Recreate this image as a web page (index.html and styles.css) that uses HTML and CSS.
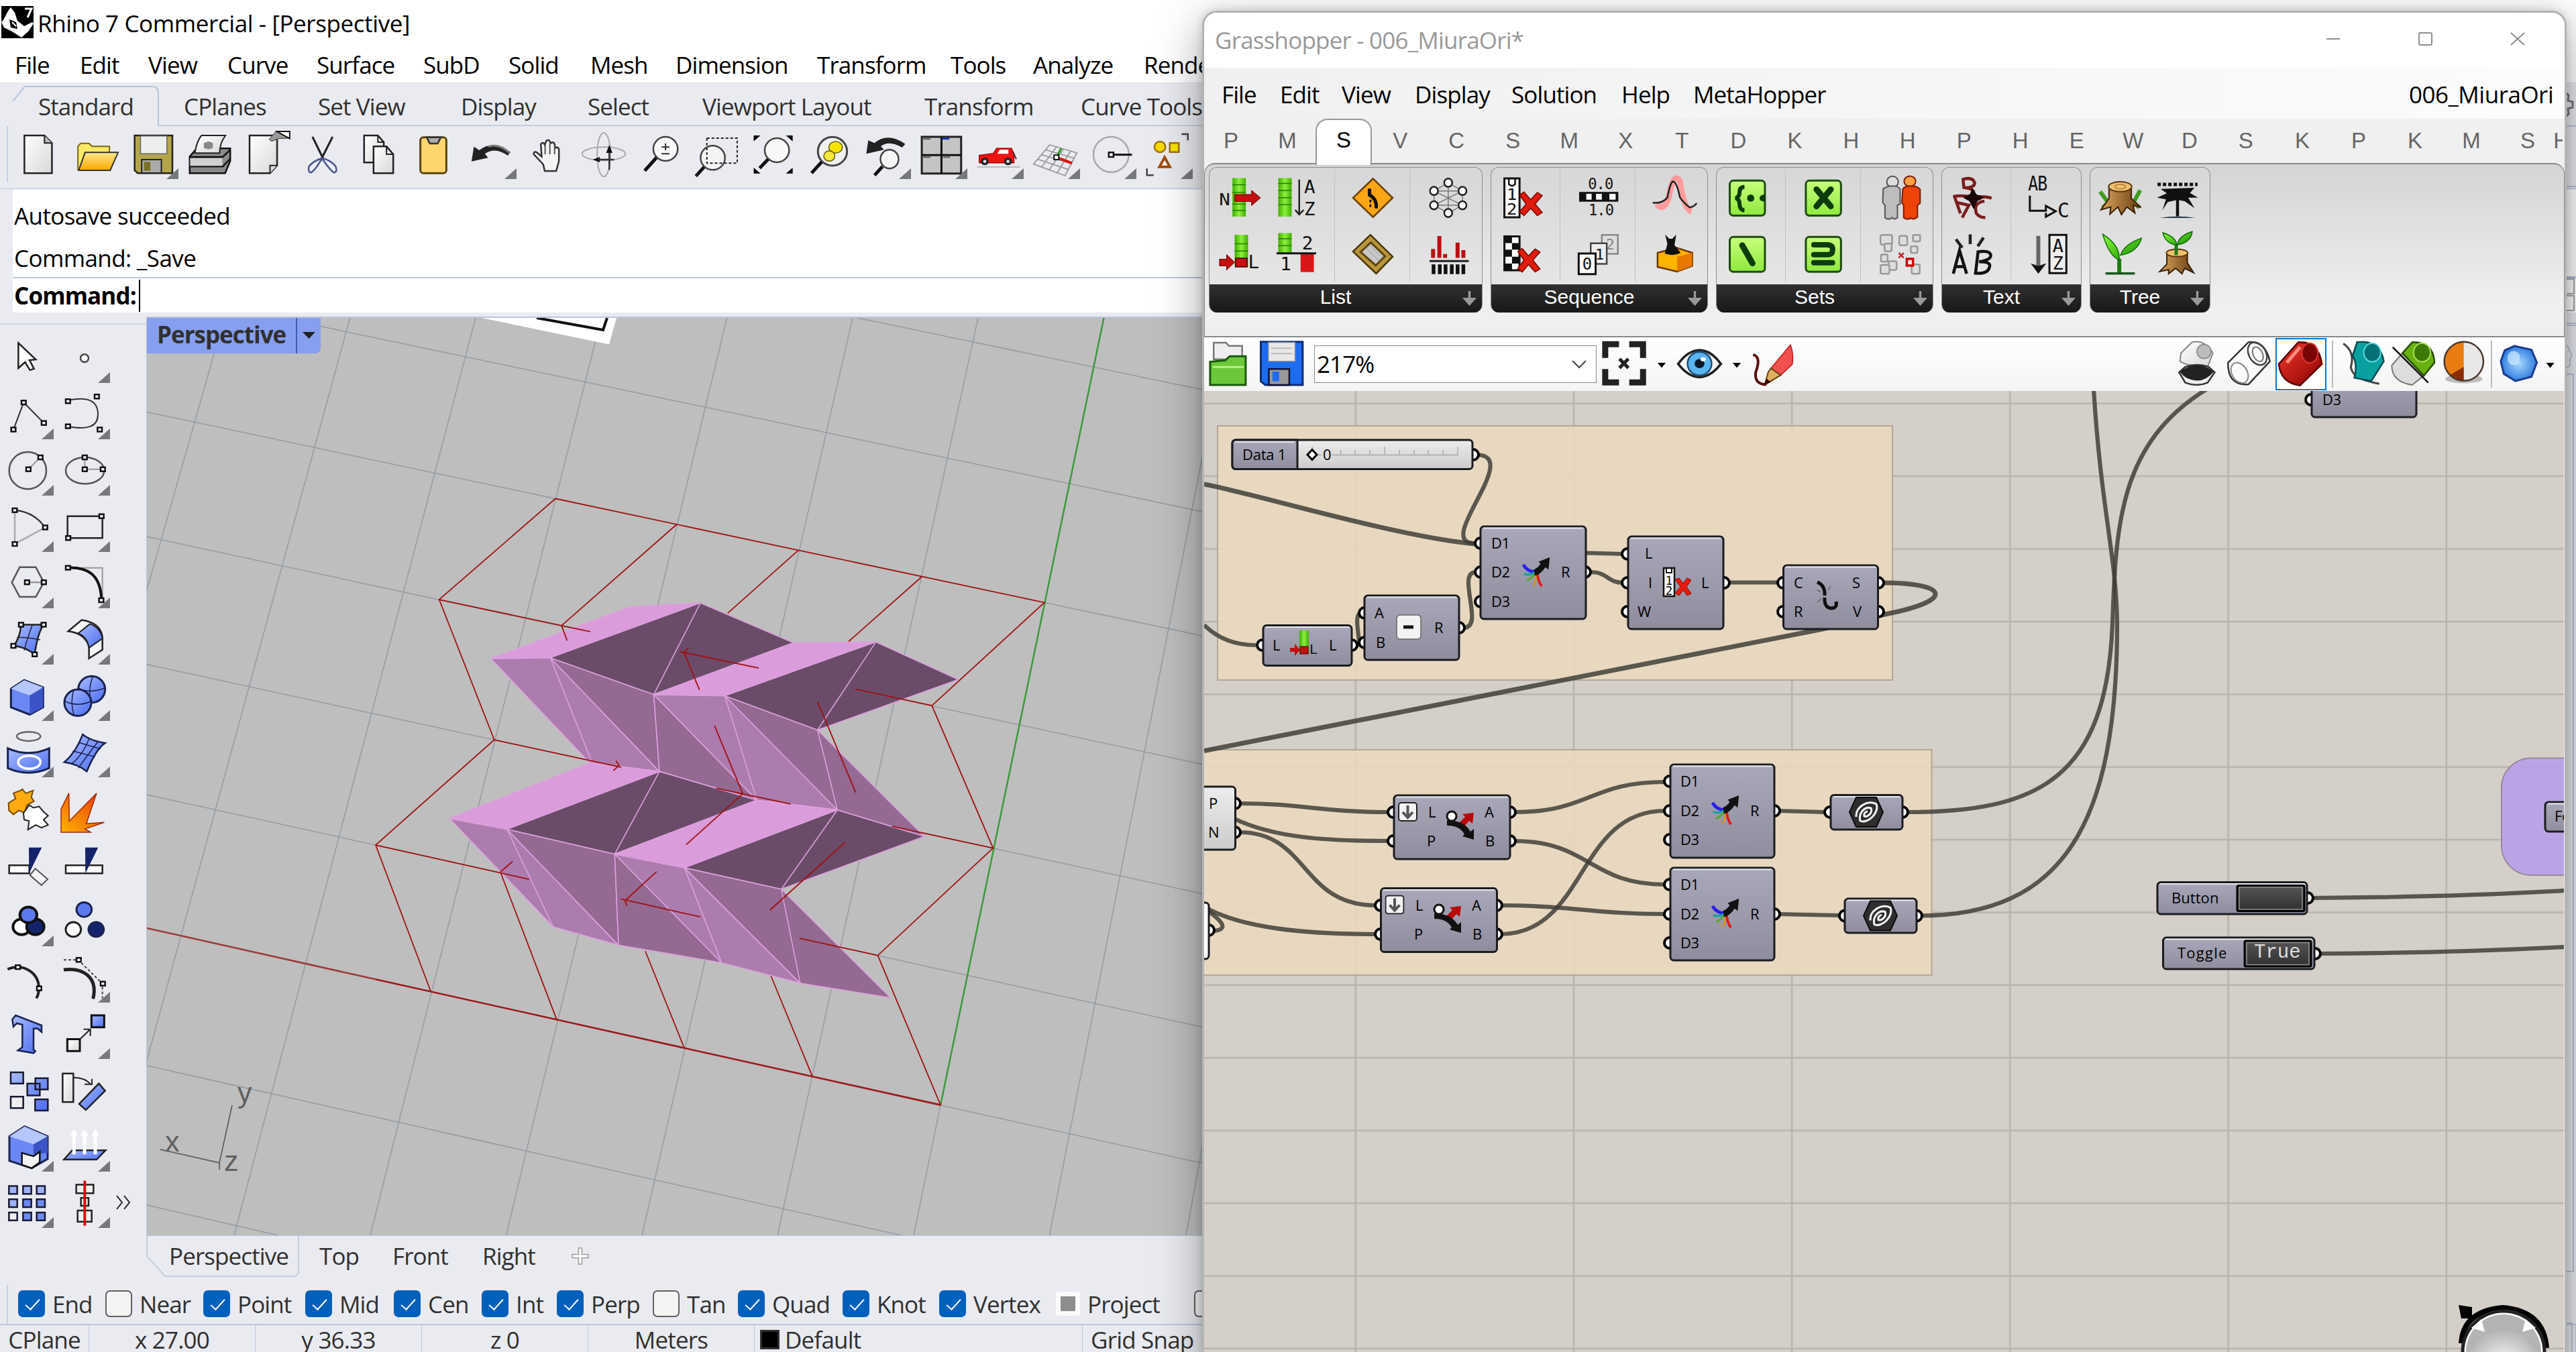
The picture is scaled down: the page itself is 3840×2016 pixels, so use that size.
FILE: index.html
```html
<!DOCTYPE html>
<html lang="en">
<head>
<meta charset="utf-8">
<title>Rhino 7 Commercial - [Perspective]</title>
<link rel="stylesheet" href="styles.css">
</head>
<body>
<svg class="defs" width="0" height="0" aria-hidden="true">
  <defs>
    <linearGradient id="paper" x1="0" y1="0" x2="1" y2="1"><stop offset="0" stop-color="#fff"/><stop offset="1" stop-color="#d8d8d8"/></linearGradient>
    <linearGradient id="gold" x1="0" y1="0" x2="0" y2="1"><stop offset="0" stop-color="#ffe98a"/><stop offset="1" stop-color="#f9a800"/></linearGradient>
    <linearGradient id="blue" x1="0" y1="0" x2="1" y2="1"><stop offset="0" stop-color="#a9bcff"/><stop offset="1" stop-color="#4a6cf0"/></linearGradient>
    <linearGradient id="fire" x1="0" y1="1" x2="1" y2="0"><stop offset="0" stop-color="#ffb400"/><stop offset="1" stop-color="#e83400"/></linearGradient>
    <linearGradient id="green" x1="0" y1="0" x2="0" y2="1"><stop offset="0" stop-color="#c8ff7c"/><stop offset="1" stop-color="#8fe83e"/></linearGradient>
    <linearGradient id="bar" x1="0" y1="0" x2="1" y2="0"><stop offset="0" stop-color="#3fae00"/><stop offset=".5" stop-color="#8cf03c"/><stop offset="1" stop-color="#3fae00"/></linearGradient>
    <linearGradient id="node" x1="0" y1="0" x2="0" y2="1"><stop offset="0" stop-color="#a9a8ba"/><stop offset="1" stop-color="#8f8d9d"/></linearGradient>
    <linearGradient id="lite" x1="0" y1="0" x2="0" y2="1"><stop offset="0" stop-color="#ededed"/><stop offset="1" stop-color="#cbcbcb"/></linearGradient>
    <linearGradient id="dark" x1="0" y1="0" x2="0" y2="1"><stop offset="0" stop-color="#555"/><stop offset="1" stop-color="#303030"/></linearGradient>
    <linearGradient id="red" x1="0" y1="0" x2="1" y2="1"><stop offset="0" stop-color="#f03a2c"/><stop offset="1" stop-color="#8a0000"/></linearGradient>
    <linearGradient id="wood" x1="0" y1="0" x2="1" y2="0"><stop offset="0" stop-color="#d9a55c"/><stop offset="1" stop-color="#6a3c12"/></linearGradient>
    <linearGradient id="leaf" x1="0" y1="0" x2="1" y2="1"><stop offset="0" stop-color="#8cff3a"/><stop offset="1" stop-color="#128a00"/></linearGradient>
    <radialGradient id="orb"><stop offset="0" stop-color="#a9d8ff"/><stop offset="1" stop-color="#2f7de0"/></radialGradient>
    <radialGradient id="dial" cy=".7"><stop offset="0" stop-color="#fff"/><stop offset="1" stop-color="#b4b4b4"/></radialGradient>
    <symbol id="merge" viewBox="0 0 44 48" overflow="visible">
      <path d="M1 12Q8 24 22 24" stroke="#2a1cf0" stroke-width="5" fill="none"/>
      <path d="M2 27Q12 30 22 24" stroke="#1fa0a0" stroke-width="4" fill="none"/>
      <path d="M7 38Q16 34 22 24" stroke="#55a820" stroke-width="3" fill="none"/>
      <path d="M17 46Q24 36 22 24" stroke="#d89020" stroke-width="3" fill="none"/>
      <path d="M31 47Q24 38 24 22" stroke="#e01818" stroke-width="4" fill="none"/>
      <path d="M18 20Q24 18 29 11L26 7L44 0L42 20L37 16Q30 27 20 30Z" fill="#111"/>
    </symbol>
    <symbol id="dispatch" viewBox="0 0 42 44" overflow="visible">
      <circle cx="8" cy="8" r="7" fill="#fff" stroke="#111" stroke-width="3"/>
      <path d="M19 18L28 9L24 5L41 3L39 19L34 15L27 23Z" fill="#b80a0a"/>
      <path d="M1 22Q20 22 27 35L24 38L41 43L41 27L36 31Q26 14 1 14Z" fill="#111"/>
    </symbol>
    <symbol id="hex" viewBox="0 0 52 46" overflow="visible">
      <path d="M11 1H41L51 23L41 45H11L1 23Z" fill="#2e2e2e" stroke="#0c0c0c" stroke-width="2"/>
      <path d="M11 30C10 14 30 4 41 11C46 24 28 41 17 36C14 24 24 14 33 17C36 24 28 31 23 29C22 25 25 22 28 22" fill="none" stroke="#f2f2f2" stroke-width="3"/>
    </symbol>
    <symbol id="item" viewBox="0 0 43 44" overflow="visible">
      <rect x="1" y="1" width="16" height="42" fill="#fff" stroke="#111" stroke-width="2.5"/>
      <text x="3.500" y="26" class="px" font-size="18">1</text><text x="3.500" y="41" class="px" font-size="18">2</text><path d="M5 2V8H13V2" fill="none" stroke="#111" stroke-width="2"/>
      <path d="M18 18L24 16L30 24L36 16L42 19L35 29L42 39L36 42L30 34L24 42L18 38L26 29Z" fill="#e81c0c" stroke="#8a0800" stroke-width="1"/>
    </symbol>
    <symbol id="drop" viewBox="0 0 29 29"><rect x="1" y="1" width="27" height="27" rx="4" fill="#f2f2f2" stroke="#222" stroke-width="2"/><path d="M14.500 5V21M7 15L14.500 23L22 15" fill="none" stroke="#555" stroke-width="4"/></symbol>
  </defs>
</svg>

<main class="rhino">
  <header class="title">
    <svg class="logo" viewBox="0 0 48 48"><rect width="48" height="48" fill="#000"/><path d="M14 2C7 10 5 20 0 24L4 32L16 38L30 47L40 38L48 26L46 24L34 30L24 22L20 10Z" fill="#fff"/><path d="M12 20L22 24L24 34L14 32Z" fill="#000"/><path d="M16 24L22 30" stroke="#fff" stroke-width="2"/><path d="M35 4H45L39 17" fill="none" stroke="#fff" stroke-width="3"/></svg>
    <span class="title-text">Rhino 7 Commercial - [Perspective]</span>
  </header>
  <nav class="menu"><span>File</span><span>Edit</span><span>View</span><span>Curve</span><span>Surface</span><span>SubD</span><span>Solid</span><span>Mesh</span><span>Dimension</span><span>Transform</span><span>Tools</span><span>Analyze</span><span>Render</span></nav>
  <section class="toolbars">
    <div class="tabs">
      <svg class="tab-shape" width="1800" height="64" viewBox="0 0 1800 64"><path d="M19 27L37 5H226Q236 5 236 15V63.500H1800" fill="none" stroke="#b9c5dc" stroke-width="2"/></svg>
      <span>Standard</span><span>CPlanes</span><span>Set View</span><span>Display</span><span>Select</span><span>Viewport Layout</span><span>Transform</span><span>Curve Tools</span>
    </div>
    <div class="tools">
      <i class="cell"><svg preserveAspectRatio="none" viewBox="30.700 564 143.200 252"><path d="M62 606H113L132 640V775H62Z" fill="url(#paper)" stroke="#222" stroke-width="2.500"/><path d="M113 606V640H132" fill="#bbb" stroke="#222" stroke-width="2"/></svg></i>
      <i class="cell"><svg preserveAspectRatio="none" viewBox="173.800 564 143.200 252"><path d="M198 760V655L205 641H226L234 655H278V762Z" fill="#fbe96a" stroke="#7a6410" stroke-width="2"/><path d="M200 762L216 682H300L280 762Z" fill="url(#gold)" stroke="#333" stroke-width="2"/></svg></i>
      <i class="cell fly"><svg preserveAspectRatio="none" viewBox="317 564 143.200 252"><path d="M342 606H438V775H350L342 762Z" fill="#b3a64a" stroke="#222" stroke-width="2.500"/><rect x="357" y="608" width="67" height="80" fill="#eee" stroke="#666" stroke-width="1.500"/><rect x="360" y="714" width="50" height="60" fill="#aaa" stroke="#222" stroke-width="2"/><rect x="366" y="724" width="16" height="40" fill="#7c7028"/></svg></i>
      <i class="cell"><svg preserveAspectRatio="none" viewBox="460.200 564 143.200 252"><path d="M482 700L500 664H585V720L572 775H482Z" fill="#8a8a8a" stroke="#111" stroke-width="2.500"/><path d="M495 685Q500 630 512 606H573Q558 640 558 685Z" fill="url(#paper)" stroke="#222" stroke-width="2"/><path d="M482 702H566L585 670M482 745H566L585 710" stroke="#111" stroke-width="2.500" fill="none"/><rect x="483" y="708" width="82" height="34" fill="#d0d0d0"/><path d="M518 640L530 632L541 640V662L530 668L518 662Z" fill="#888"/></svg></i>
      <i class="cell"><svg preserveAspectRatio="none" viewBox="603.300 564 143.200 252"><path d="M634 606H704V740L686 775H634Z" fill="url(#paper)" stroke="#222" stroke-width="2.500"/><path d="M704 740H686V775" fill="#ddd" stroke="#222" stroke-width="2"/><path d="M684 624L700 590H735V618L708 620L690 632Z" fill="#999" stroke="#333" stroke-width="1"/><path d="M704 588H736V620L715 600Z" fill="#fff" stroke="#111" stroke-width="2"/></svg></i>
      <i class="cell"><svg preserveAspectRatio="none" viewBox="746.500 564 143.200 252"><path d="M794 612L824 720M845 612L814 720" stroke="#222" stroke-width="3" fill="none"/><path d="M818 708Q795 720 785 745Q782 770 790 772Q802 760 818 708Q840 715 853 745Q858 770 848 772Q838 760 818 708" fill="#eef" stroke="#4a5590" stroke-width="2.500"/></svg></i>
      <i class="cell"><svg preserveAspectRatio="none" viewBox="889.600 564 143.200 252"><path d="M925 606H960L975 636V727H925Z" fill="url(#paper)" stroke="#222" stroke-width="2.500"/><path d="M949 655H982L999 690V775H949Z" fill="url(#paper)" stroke="#222" stroke-width="2.500"/><path d="M960 606V636H975M982 655V690H999" fill="none" stroke="#222" stroke-width="2"/></svg></i>
      <i class="cell"><svg preserveAspectRatio="none" viewBox="1032.800 564 143.200 252"><rect x="1068" y="614" width="66" height="161" rx="8" ry="14" fill="#fdd66e" stroke="#5c4410" stroke-width="3"/><path d="M1084 614H1120L1112 642H1092Z" fill="#aaa" stroke="#333" stroke-width="2.500"/></svg></i>
      <i class="cell fly"><svg preserveAspectRatio="none" viewBox="1176 564 143.200 252"><path d="M1198 722L1204 656L1218 672Q1250 625 1297 680L1290 696Q1258 655 1232 688L1240 706Z" fill="#222"/><path d="M1240 656Q1268 640 1294 684" stroke="#777" stroke-width="3" fill="none"/></svg></i>
      <i class="cell"><svg preserveAspectRatio="none" viewBox="1319.100 564 143.200 252"><path d="M1384 765L1380 735L1356 690Q1356 674 1364 682L1376 700L1374 645Q1380 632 1384 648L1388 630Q1394 622 1397 634L1400 640Q1407 632 1409 646L1411 662Q1418 655 1420 668V720L1413 765Z" fill="#f4f4f4" stroke="#333" stroke-width="2.500"/><path d="M1385 648V690M1397 640V690M1409 650V690" stroke="#555" stroke-width="2"/></svg></i>
      <i class="cell"><svg preserveAspectRatio="none" viewBox="1462.300 564 143.200 252"><ellipse cx="1534" cy="692" rx="17" ry="98" fill="none" stroke="#aaa" stroke-width="2"/><ellipse cx="1534" cy="688" rx="55" ry="30" fill="none" stroke="#aaa" stroke-width="2"/><path d="M1548 648L1540 684H1556ZM1506 714L1524 702V726Z" fill="#111"/><path d="M1548 684V760M1520 714H1560" stroke="#333" stroke-width="2.500"/></svg></i>
      <i class="cell"><svg preserveAspectRatio="none" viewBox="71.600 564 143.200 252"><path d="M104 764L134 705" stroke="#111" stroke-width="5"/><ellipse cx="157" cy="666" rx="31" ry="54" fill="#f8f8f8" stroke="#444" stroke-width="2.500"/><path d="M157 642V672M147 658H167M147 688H167" stroke="#333" stroke-width="2"/></svg></i>
      <i class="cell"><svg preserveAspectRatio="none" viewBox="214.700 564 143.200 252"><path d="M234 788L256 745" stroke="#111" stroke-width="5"/><ellipse cx="277" cy="706" rx="31" ry="54" fill="#f4f4f4" stroke="#444" stroke-width="2.500"/><rect x="262" y="618" width="77" height="112" fill="none" stroke="#222" stroke-width="2" stroke-dasharray="4 3"/></svg></i>
      <i class="cell"><svg preserveAspectRatio="none" viewBox="357.900 564 143.200 252"><path d="M396 752L418 712" stroke="#111" stroke-width="5"/><ellipse cx="440" cy="672" rx="31" ry="54" fill="#f8f8f8" stroke="#444" stroke-width="2.500"/><path d="M381 606H398L381 632ZM480 606H463L480 632ZM381 776V750L398 776ZM480 776V750L463 776Z" fill="#000"/></svg></i>
      <i class="cell"><svg preserveAspectRatio="none" viewBox="501 564 143.200 252"><path d="M528 774L560 712" stroke="#111" stroke-width="5"/><ellipse cx="581" cy="677" rx="37" ry="64" fill="#f0f0f0" stroke="#444" stroke-width="3"/><ellipse cx="589" cy="659" rx="17" ry="26" fill="#f5e400" stroke="#665c00" stroke-width="1.500"/><ellipse cx="573" cy="698" rx="14" ry="23" fill="#f5e83c" stroke="#665c00" stroke-width="1.500"/></svg></i>
      <i class="cell fly"><svg preserveAspectRatio="none" viewBox="644.200 564 143.200 252"><path d="M667 688L672 628L688 640Q720 590 766 644L758 660Q724 625 704 655L712 670Z" fill="#222"/><path d="M688 784L708 745" stroke="#111" stroke-width="5"/><ellipse cx="726" cy="712" rx="23" ry="42" fill="#f6f6f6" stroke="#444" stroke-width="2.500"/></svg></i>
      <i class="cell fly"><svg preserveAspectRatio="none" viewBox="787.400 564 143.200 252"><rect x="808" y="612" width="100" height="164" fill="#c4c4c4" stroke="#222" stroke-width="3"/><path d="M858 612V776M808 694H908" stroke="#111" stroke-width="3"/><path d="M812 620H830M812 702H830M862 702H880" stroke="#666" stroke-width="3"/><path d="M860 620H878" stroke="#1830b0" stroke-width="3"/></svg></i>
      <i class="cell fly"><svg preserveAspectRatio="none" viewBox="930.500 564 143.200 252"><path d="M948 747H1058" stroke="#bbb" stroke-width="2"/><path d="M954 728V695L990 686L998 664H1036L1042 690V728Z" fill="#ee1414" stroke="#a00" stroke-width="1.500"/><path d="M1000 688L1006 670H1028V688Z" fill="#fff"/><path d="M1040 680L1048 712" stroke="#333" stroke-width="2"/><ellipse cx="968" cy="722" rx="10" ry="17" fill="#222"/><ellipse cx="1027" cy="722" rx="10" ry="17" fill="#222"/><ellipse cx="968" cy="722" rx="4" ry="7" fill="#ddd"/><ellipse cx="1027" cy="722" rx="4" ry="7" fill="#ddd"/></svg></i>
      <i class="cell fly"><svg preserveAspectRatio="none" viewBox="1073.700 564 143.200 252"><path d="M1133 648L1202 684L1172 786L1092 734ZM1122 670L1196 708M1112 692L1188 732M1102 712L1180 758M1150 658L1112 748M1168 667L1132 760M1186 676L1152 773" fill="none" stroke="#9a9a9a" stroke-width="1.800"/><path d="M1150 704L1162 664" stroke="#1a9a1a" stroke-width="3"/><path d="M1150 704L1190 730" stroke="#e01010" stroke-width="4"/><rect x="1144" y="694" width="12" height="20" fill="#fff" stroke="#111" stroke-width="2"/></svg></i>
      <i class="cell fly"><svg preserveAspectRatio="none" viewBox="1216.800 564 143.200 252"><ellipse cx="1289" cy="691" rx="45" ry="79" fill="none" stroke="#aaa" stroke-width="2.500"/><path d="M1290 692H1342" stroke="#111" stroke-width="3"/><rect x="1283" y="682" width="12" height="20" fill="#fff" stroke="#111" stroke-width="2.500"/></svg></i>
      <i class="cell fly"><svg preserveAspectRatio="none" viewBox="1360 564 143.200 252"><path d="M1468 600H1484V628M1380 754V784H1397" fill="none" stroke="#444" stroke-width="2.500"/><ellipse cx="1413" cy="657" rx="14" ry="24" fill="#f8dc00" stroke="#a07010" stroke-width="2.500"/><rect x="1438" y="640" width="23" height="40" fill="#f8e400" stroke="#a07010" stroke-width="2.500"/><path d="M1425 704L1438 746H1412Z" fill="#fff" stroke="#a04c08" stroke-width="4"/></svg></i>
    </div>
  </section>
  <section class="command">
    <div class="history"><p>Autosave succeeded</p><p>Command: _Save</p></div>
    <div class="prompt"><b>Command:</b><i class="caret"></i></div>
  </section>
  <div class="work">
    <aside class="palette">
      <i class="cell"><svg preserveAspectRatio="none" viewBox="0 21.300 252 85.200"><path d="M82 41L160 66L132 67L152 80L134 82L112 70L82 79Z" fill="#fff" stroke="#222" stroke-width="2.500"/></svg></i>
      <i class="cell fly"><svg preserveAspectRatio="none" viewBox="252 21.300 252 85.200"><ellipse cx="378" cy="64" rx="18" ry="6" fill="#fff" stroke="#444" stroke-width="2.500"/></svg></i>
      <i class="cell fly"><svg preserveAspectRatio="none" viewBox="0 106.500 252 85.200"><path d="M60 172L106 131L196 162" fill="none" stroke="#333" stroke-width="2"/><path class="h" d="M50 169h20v6h-20zM96 128h20v6h-20zM186 159h20v6h-20z"/></svg></i>
      <i class="cell fly"><svg preserveAspectRatio="none" viewBox="252 106.500 252 85.200"><path d="M304 128Q440 118 438 150Q436 176 304 167" fill="none" stroke="#333" stroke-width="2"/><path class="h" d="M294 126h20v6h-20zM294 164h20v6h-20zM423 119h20v6h-20zM436 169h20v6h-20z"/></svg></i>
      <i class="cell fly"><svg preserveAspectRatio="none" viewBox="0 191.700 252 85.200"><ellipse cx="124" cy="234" rx="83" ry="28" fill="none" stroke="#555" stroke-width="2.500"/><path d="M127 232L180 214" stroke="#999" stroke-width="2"/><path class="h" d="M117 229h20v6h-20zM171 211h20v6h-20z"/></svg></i>
      <i class="cell fly"><svg preserveAspectRatio="none" viewBox="252 191.700 252 85.200"><ellipse cx="380" cy="234" rx="86" ry="20" fill="none" stroke="#555" stroke-width="2.500"/><path d="M379 214V232H460" fill="none" stroke="#999" stroke-width="2"/><path class="h" d="M369 229h20v6h-20zM369 211h20v6h-20zM450 229h20v6h-20z"/></svg></i>
      <i class="cell fly"><svg preserveAspectRatio="none" viewBox="0 276.900 252 85.200"><path d="M66 345V294M66 345L202 320" stroke="#aaa" stroke-width="2.500"/><path d="M66 294Q150 296 202 320" fill="none" stroke="#333" stroke-width="2.500"/><path class="h" d="M56 291h20v6h-20zM56 342h20v6h-20zM192 317h20v6h-20z"/></svg></i>
      <i class="cell fly"><svg preserveAspectRatio="none" viewBox="252 276.900 252 85.200"><rect x="302" y="303" width="156" height="33" fill="none" stroke="#222" stroke-width="2.500"/><path class="h" d="M295 333h20v6h-20zM444 300h20v6h-20z"/></svg></i>
      <i class="cell fly"><svg preserveAspectRatio="none" viewBox="0 362.100 252 85.200"><path d="M53 403L88 380H160L196 403L160 425H88Z" fill="none" stroke="#555" stroke-width="2.500"/><path d="M121 403H196" stroke="#888" stroke-width="2"/><path class="h" d="M111 400h20v6h-20zM186 400h20v6h-20z"/></svg></i>
      <i class="cell fly"><svg preserveAspectRatio="none" viewBox="252 362.100 252 85.200"><path d="M304 381H458V430" fill="none" stroke="#999" stroke-width="2"/><path d="M304 381C390 380 450 390 454 430" fill="none" stroke="#111" stroke-width="4"/><path class="h" d="M294 378h20v6h-20zM443 427h20v6h-20z"/></svg></i>
      <i class="cell fly"><svg preserveAspectRatio="none" viewBox="0 447.300 252 85.200"><path d="M94 467H195Q168 480 155 512Q110 500 60 499Q90 488 94 467Z" fill="url(#blue)" stroke="#222" stroke-width="2.500"/><path d="M145 467Q120 490 108 506M76 486Q130 486 180 490" fill="none" stroke="#223" stroke-width="1.500"/><path class="h" d="M84 464h20v6h-20zM185 464h20v6h-20zM50 496h20v6h-20zM145 509h20v6h-20z"/></svg></i>
      <i class="cell fly"><svg preserveAspectRatio="none" viewBox="252 447.300 252 85.200"><path d="M305 477L365 460Q450 464 458 486V505L398 518V500Q380 480 305 477Z" fill="#f5f5f5" stroke="#222" stroke-width="2.500"/><path d="M350 480L402 466Q450 472 458 488L398 502Q390 486 350 480Z" fill="url(#blue)" stroke="#222" stroke-width="2"/></svg></i>
      <i class="cell fly"><svg preserveAspectRatio="none" viewBox="0 532.500 252 85.200"><path d="M49 564L108 551L193 562V592L133 603L49 592Z" fill="#6a87f5" stroke="#1a2250" stroke-width="3"/><path d="M49 564L108 551L193 562L133 574Z" fill="#b6c6ff"/><path d="M133 574L193 562V592L133 603Z" fill="#3a54c8"/></svg></i>
      <i class="cell fly"><svg preserveAspectRatio="none" viewBox="252 532.500 252 85.200"><ellipse cx="410" cy="565" rx="60" ry="20" fill="url(#blue)" stroke="#1a2250" stroke-width="3"/><ellipse cx="348" cy="585" rx="60" ry="20" fill="url(#blue)" stroke="#1a2250" stroke-width="3"/><path d="M290 583Q350 592 406 583M330 566Q312 585 332 605M352 563Q400 572 468 563M415 546Q395 560 405 584" fill="none" stroke="#1a2250" stroke-width="1.500"/></svg></i>
      <i class="cell fly"><svg preserveAspectRatio="none" viewBox="0 617.700 252 85.200"><ellipse cx="128" cy="636" rx="53" ry="7" fill="none" stroke="#666" stroke-width="2.500"/><path d="M35 654Q127 668 220 654V684Q127 698 35 684Z" fill="url(#blue)" stroke="#1a2250" stroke-width="3"/><ellipse cx="131" cy="675" rx="50" ry="10" fill="none" stroke="#fff" stroke-width="3.500"/></svg></i>
      <i class="cell fly"><svg preserveAspectRatio="none" viewBox="252 617.700 252 85.200"><path d="M370 633Q400 642 470 646Q430 655 388 689Q350 678 288 675Q340 660 370 633Z" fill="url(#blue)" stroke="#1a2250" stroke-width="2.500"/><path d="M325 658L425 667M350 645L450 655M400 638Q370 665 318 678M440 643Q390 665 350 684" fill="none" stroke="#1a2250" stroke-width="1.500"/></svg></i>
      <i class="cell"><svg preserveAspectRatio="none" viewBox="0 702.900 252 85.200"><path d="M38 737L70 730L60 722L90 718L100 716L115 722L148 718L140 728L152 734L120 740L110 752L85 748L60 754L40 748Z" fill="#ffab10" stroke="#7a4c00" stroke-width="2"/><path d="M105 752L130 740L150 744L175 742L195 750L215 756L195 762L215 770L185 774L160 770L125 777L130 764L108 762Z" fill="#fff" stroke="#222" stroke-width="2"/></svg></i>
      <i class="cell"><svg preserveAspectRatio="none" viewBox="252 702.900 252 85.200"><path d="M273 746L308 722L310 764L432 722L386 768L466 766L380 776L405 781H273Z" fill="url(#fire)" stroke="#a02800" stroke-width="1.500"/></svg></i>
      <i class="cell"><svg preserveAspectRatio="none" viewBox="0 788.100 252 85.200"><rect x="41" y="831" width="90" height="12" fill="#fff" stroke="#222" stroke-width="2.500"/><path d="M158 836L213 852L185 861L134 846Z" fill="#f4f4f4" stroke="#555" stroke-width="2"/><path d="M129 804H187L130 843Z" fill="#14246c"/></svg></i>
      <i class="cell"><svg preserveAspectRatio="none" viewBox="252 788.100 252 85.200"><rect x="294" y="831" width="164" height="12" fill="#fff" stroke="#222" stroke-width="2.500"/><path d="M381 804H439L382 843Z" fill="#14246c"/></svg></i>
      <i class="cell fly"><svg preserveAspectRatio="none" viewBox="0 873.300 252 85.200"><ellipse cx="97" cy="924" rx="39" ry="12" fill="#fff" stroke="#111" stroke-width="4"/><ellipse cx="158" cy="924" rx="39" ry="12" fill="#14246c" stroke="#111" stroke-width="4"/><ellipse cx="127" cy="906" rx="38" ry="12" fill="#5c7af0" stroke="#111" stroke-width="4"/></svg></i>
      <i class="cell"><svg preserveAspectRatio="none" viewBox="252 873.300 252 85.200"><ellipse cx="376" cy="898" rx="34" ry="11" fill="#5c7af0" stroke="#1a2250" stroke-width="3"/><ellipse cx="328" cy="928" rx="34" ry="11" fill="#fff" stroke="#222" stroke-width="3"/><ellipse cx="430" cy="928" rx="34" ry="11" fill="#14246c" stroke="#1a2250" stroke-width="3"/></svg></i>
      <i class="cell"><svg preserveAspectRatio="none" viewBox="0 958.500 252 85.200"><path d="M34 988C110 978 175 995 174 1018Q172 1028 162 1032" fill="none" stroke="#222" stroke-width="4"/><path class="h" d="M70 982h20v6h-20zM165 1014h20v6h-20z"/></svg></i>
      <i class="cell fly"><svg preserveAspectRatio="none" viewBox="252 958.500 252 85.200"><path d="M285 974H350L458 1010V1032" fill="none" stroke="#444" stroke-width="2" stroke-dasharray="4 3"/><path d="M285 989C370 985 440 1000 416 1033" fill="none" stroke="#222" stroke-width="5"/><path class="h" d="M342 971h20v6h-20zM450 1007h20v6h-20z"/></svg></i>
      <i class="cell"><svg preserveAspectRatio="none" viewBox="0 1043.700 252 85.200"><path d="M55 1064L70 1058L186 1073V1083L168 1078L150 1078V1110L158 1112L150 1115L80 1111L100 1106V1072L75 1070L60 1075Z" fill="url(#blue)" stroke="#1a2250" stroke-width="2.500"/></svg></i>
      <i class="cell fly"><svg preserveAspectRatio="none" viewBox="252 1043.700 252 85.200"><rect x="301" y="1094" width="56" height="18" fill="url(#paper)" stroke="#111" stroke-width="3"/><rect x="409" y="1058" width="57" height="18" fill="url(#blue)" stroke="#111" stroke-width="3"/><path d="M358 1094L404 1079M374 1079H404V1089" fill="none" stroke="#222" stroke-width="2"/></svg></i>
      <i class="cell"><svg preserveAspectRatio="none" viewBox="0 1128.900 252 85.200"><g stroke="#1a1a30" stroke-width="2.500"><path d="M48 1144h56v17h-56zM158 1153h56v17h-56zM122 1161h56v18h-56zM157 1185h57v17h-57z" fill="url(#blue)"/><path d="M48 1181h56v17h-56z" fill="#eee"/></g></svg></i>
      <i class="cell"><svg preserveAspectRatio="none" viewBox="252 1128.900 252 85.200"><rect x="280" y="1146" width="48" height="43" fill="url(#paper)" stroke="#222" stroke-width="2.500"/><path d="M330 1152Q380 1152 408 1163M378 1162H411V1154" fill="none" stroke="#222" stroke-width="2"/><path d="M354 1192L442 1161L470 1172L384 1201Z" fill="url(#blue)" stroke="#222" stroke-width="2.500"/></svg></i>
      <i class="cell fly"><svg preserveAspectRatio="none" viewBox="0 1214.100 252 85.200"><path d="M42 1241L110 1226L213 1241V1275L142 1289L42 1278Z" fill="#6a87f5" stroke="#1a2250" stroke-width="3"/><path d="M42 1241L110 1226L213 1241L150 1253Z" fill="#b6c6ff"/><path d="M150 1253L213 1241V1266L150 1268Z" fill="#3a54c8"/><path d="M98 1266L150 1271L178 1264V1280L142 1289L98 1284Z" fill="#f4f4f4" stroke="#111" stroke-width="2.500"/></svg></i>
      <i class="cell fly"><svg preserveAspectRatio="none" viewBox="252 1214.100 252 85.200"><path d="M323 1262H472L432 1276H286Z" fill="url(#blue)" stroke="#222" stroke-width="2.500"/><path d="M331 1268V1236M378 1268V1236M426 1268V1236" stroke="#fff" stroke-width="5"/><path d="M314 1240L331 1229L348 1240ZM361 1240L378 1229L395 1240ZM409 1240L426 1229L443 1240Z" fill="#fff"/></svg></i>
      <i class="cell fly"><svg preserveAspectRatio="none" viewBox="0 1299.300 252 85.200"><g stroke="#1a1a30" stroke-width="2.500" fill="#9db2ff"><path d="M40 1316h37v12h-37zM103 1316h37v12h-37zM164 1316h37v12h-37zM40 1336h37v12h-37z"/><path d="M103 1336h37v12h-37zM164 1336h37v12h-37zM103 1356h37v12h-37zM164 1356h37v12h-37z" fill="#6d8bf5"/><path d="M40 1356h37v12h-37z" fill="#eee"/></g></svg></i>
      <i class="cell fly"><svg preserveAspectRatio="none" viewBox="252 1299.300 252 85.200"><g fill="#eee" stroke="#222" stroke-width="2.500"><path d="M341 1314h77v13h-77zM362 1334h34v12h-34zM347 1353h63v17h-63z"/></g><path d="M379 1308V1376" stroke="#d01010" stroke-width="4"/></svg></i>
      <svg class="more" width="24" height="30" viewBox="0 0 24 30"><path d="M2 4L10 14L2 24M13 4L21 14L13 24" fill="none" stroke="#222" stroke-width="2"/></svg>
    </aside>
    <section class="view-area">
      <div class="viewport">
        <svg class="scene" viewBox="219 473 1621 1368">
          <g stroke="#939ba2" stroke-width="1.500">
            <path d="M334.400 473L-55 1841M521.700 473L147.600 1841M709 473L349 1841M896.300 473L552 1841M1083.600 473L754.500 1841M1271 473L957 1841M1458 473L1159 1841M1402 1647L1362 1841M1833 473L1564.400 1841M2020 473L1768 1841"/>
            <path d="M1278 473L1840 590M418 473L1840 772M219 613.300L828 742.600M1557 897.500L1840 957M219 799.300L1840 1149M219 989.700L1840 1342M219 1184L1840 1541M1402 1647L1840 1744M219 1588L1343.500 1841M219 1796L414.500 1841"/>
          </g>
          <path d="M219 1383L560 1459.300L1402 1647" fill="none" stroke="#9c3a3a" stroke-width="2.500"/>
          <path d="M1645.500 473L1402 1647" stroke="#3c9a3c" stroke-width="2.500"/>
          <path d="M718 473L908 512.500L919 473Z" fill="#fff"/><path d="M800 473L899 491L905 473" fill="none" stroke="#111" stroke-width="4"/>
          <g class="mesh" transform="translate(560 680) scale(.70151 .63776)">
            <g fill="none" stroke="#a01414" stroke-width="1.800"><path d="M382 98L1421 341L1182 582L1312 915L1067 1166L1200 1515L0 1222M382 98L135 334L252 662L0 908L117 1250M640 158L395 395M898 219L748 366M1160 281L1005 432M265 971L385 1317M573 1156L656 1383M840 1214L928 1449"/></g>
            <g stroke="#dca0dc" stroke-width="1.600" stroke-linejoin="round">
              <path d="M245 472L371 470L603 736L455 716Z" fill="#ad7cae"/>
              <path d="M371 470L591 556L603 736Z" fill="#946992"/>
              <path d="M591 556L603 736L810 803Z" fill="#946992"/>
              <path d="M591 556L742 559L981 826L810 803Z" fill="#ad7cae"/>
              <path d="M742 559L939 639L1166 888L981 826Z" fill="#946992"/>
              <path d="M245 472L541 351L690 342L371 470Z" fill="#da9cda"/>
              <path d="M371 470L690 342L888 435L591 556Z" fill="#6a4c69"/>
              <path d="M591 556L888 435L1063 433L742 559Z" fill="#da9cda"/>
              <path d="M742 559L1063 433L1238 521L939 639Z" fill="#6a4c69"/>
              <path d="M157 846L279 871L516 1142L377 1099Z" fill="#ad7cae"/>
              <path d="M279 871L508 929L516 1142Z" fill="#946992"/>
              <path d="M508 929L735 1183L516 1142Z" fill="#946992"/>
              <path d="M508 929L656 961L902 1231L735 1183Z" fill="#ad7cae"/>
              <path d="M656 961L862 1011L1094 1265L902 1231Z" fill="#946992"/>
              <path d="M157 846L455 716L603 736L279 871Z" fill="#da9cda"/>
              <path d="M279 871L603 736L810 803L508 929Z" fill="#6a4c69"/>
              <path d="M508 929L810 803L981 826L656 961Z" fill="#da9cda"/>
              <path d="M656 961L981 826L1166 888L862 1011Z" fill="#6a4c69"/>
              <path d="M371 470L460 716M690 342L591 556M742 559L810 803M1063 433L939 639M939 639L981 826M279 871L377 1099M603 736L508 929M656 961L735 1183M981 826L862 1011M862 1011L902 1231" fill="none"/>
            </g>
            <g fill="none" stroke="#a01010" stroke-width="1.800"><path d="M135 334L456 409M395 395L407 430M665 447L655 457L688 545M647 456L814 494M1019 543L1182 582M939 573L1020 785M252 662L522 726M511 711L517 722L505 734M720 629L780 788L660 907M724 775L882 812M1097 864L1312 915M997 902L838 1060M0 908L326 988M291 946L265 971M597 970L530 1038L534 1050M521 1034L690 1076M901 1126L1067 1166"/></g>
          </g>
          <path d="M239 1713L327 1733L346 1647M327 1733V1743" fill="none" stroke="#606060" stroke-width="1.800"/>
          <g class="axis"><text x="246" y="1716">x</text><text x="354" y="1643">y</text><text x="334" y="1745">z</text></g>
        </svg>
        <div class="view-label"><b>Perspective</b><i></i></div>
      </div>
      <div class="view-tabs">
        <svg class="view-tab-shape" width="230" height="62" viewBox="0 0 230 62"><path d="M1 0V30L28 60H222L227 55V0" fill="none" stroke="#b9c5dc" stroke-width="1.500"/></svg>
        <span>Perspective</span><span>Top</span><span>Front</span><span>Right</span>
        <svg class="plus" width="26" height="26" viewBox="0 0 26 26"><path d="M10.500 1h5v9.500h9.500v5h-9.500v9.500h-5v-9.500h-9.500v-5h9.500z" fill="#fff" stroke="#999" stroke-width="1.500"/></svg>
      </div>
    </section>
  </div>
  <section class="osnap">
    <label><i class="on"></i>End</label><label><i></i>Near</label><label><i class="on"></i>Point</label><label><i class="on"></i>Mid</label><label><i class="on"></i>Cen</label><label><i class="on"></i>Int</label><label><i class="on"></i>Perp</label><label><i></i>Tan</label><label><i class="on"></i>Quad</label><label><i class="on"></i>Knot</label><label><i class="on"></i>Vertex</label><label><i class="mid"></i>Project</label><label><i></i></label>
  </section>
  <footer class="status"><span>CPlane</span><span>x 27.00</span><span>y 36.33</span><span>z 0</span><span>Meters</span><span class="layer"><i></i>Default</span><span class="snap">Grid Snap</span></footer>
  <svg class="edge" width="18" height="2016" viewBox="3822 0 18 2016"><g fill="none" stroke="#a9b6cf" stroke-width="1.500"><path d="M3822 188H3840M3822 278H3840M3822 413H3840M3822 482H3840M3822 485H3840M3822 558H3836V1896H3822M3822 1973H3834V2016"/><path d="M3822 416H3837V438H3822M3822 441H3837V463H3822" stroke="#888"/><path d="M3826 514L3834 530L3831 534V545L3824 550" /></g><path d="M3824 138L3829 142L3828 150L3835 152V160L3828 162L3829 170L3824 174" fill="none" stroke="#777" stroke-width="3"/></svg>
</main>

<section class="gh">
  <header class="gh-title"><span>Grasshopper - 006_MiuraOri*</span>
    <svg class="controls" width="300" height="24" viewBox="3466 46 300 24"><path d="M3468 58H3488M3743 49L3763 67M3763 49L3743 67" fill="none" stroke="#8f8f8f" stroke-width="2"/><rect x="3606" y="49" width="19" height="18" rx="2" fill="none" stroke="#8f8f8f" stroke-width="2"/></svg>
  </header>
  <nav class="gh-menu"><span>File</span><span>Edit</span><span>View</span><span>Display</span><span>Solution</span><span>Help</span><span>MetaHopper</span><span class="doc">006_MiuraOri</span></nav>
  <nav class="gh-tabs"><span>P</span><span>M</span><span class="active">S</span><span>V</span><span>C</span><span>S</span><span>M</span><span>X</span><span>T</span><span>D</span><span>K</span><span>H</span><span>H</span><span>P</span><span>H</span><span>E</span><span>W</span><span>D</span><span>S</span><span>K</span><span>P</span><span>K</span><span>M</span><span>S</span><span class="cut">H</span></nav>
  <div class="ribbon">
    <article class="group list">
      <div class="icons">
        <svg preserveAspectRatio="none" viewBox="41.500 658.600 126.600 219.500"><rect x="87" y="694" width="30" height="150" fill="url(#bar)"/><path d="M87 720H117M87 750H117M87 795H117M87 820H117" stroke="#2b7a00" stroke-width="1.500"/><path d="M92 758H130V742L150 771L130 801V785H92Z" fill="#c41010" stroke="#600" stroke-width="1"/><text class="px" transform="translate(57 800) scale(1.600 2.500)" font-size="26">N</text></svg>
        <svg preserveAspectRatio="none" viewBox="168.100 658.600 126.600 219.500"><rect x="190" y="694" width="30" height="150" fill="url(#bar)"/><path d="M190 715H220M190 742H220M190 770H220M190 798H220" stroke="#2b7a00" stroke-width="1.500"/><path d="M237 700V830M228 818L237 836L247 818" fill="none" stroke="#222" stroke-width="2.500"/><text class="px" transform="translate(248 753) scale(1.600 2.600)" font-size="26">A</text><text class="px" transform="translate(248 840) scale(1.600 2.600)" font-size="26">Z</text></svg>
        <svg preserveAspectRatio="none" class="sep" viewBox="337 658.600 126.600 219.500"><path d="M403 696L447 771L403 846L358 771Z" fill="#ffa514" stroke="#6a4000" stroke-width="2.500"/><path d="M395 735V760Q412 775 410 812" fill="none" stroke="#111" stroke-width="5"/><path d="M397 778V812" stroke="#111" stroke-width="3" stroke-dasharray="4 3"/></svg>
        <svg preserveAspectRatio="none" class="sep" viewBox="505.900 658.600 126.600 219.500"><path d="M572 712L604 744V800L572 830L540 800V744ZM540 744L604 800M604 744L540 800M572 712V830M540 744H604M540 800H604" fill="none" stroke="#777" stroke-width="1.500"/><g fill="#fff" stroke="#222" stroke-width="2.500"><ellipse cx="572" cy="712" rx="9" ry="16"/><ellipse cx="604" cy="744" rx="9" ry="16"/><ellipse cx="604" cy="800" rx="9" ry="16"/><ellipse cx="572" cy="830" rx="9" ry="16"/><ellipse cx="540" cy="800" rx="9" ry="16"/><ellipse cx="540" cy="744" rx="9" ry="16"/></g></svg>
        <svg preserveAspectRatio="none" viewBox="41.500 878 126.600 219.500"><rect x="92" y="915" width="30" height="125" fill="url(#bar)"/><path d="M92 950H122M92 978H122" stroke="#2b7a00" stroke-width="1.500"/><path d="M58 1010H74V992L92 1022L74 1052V1036H58Z" fill="#c41010" stroke="#600" stroke-width="1"/><rect x="94" y="1006" width="26" height="34" fill="#c41010" stroke="#400" stroke-width="1.500"/><text class="px" transform="translate(122 1044) scale(1.600 2.600)" font-size="26">L</text></svg>
        <svg preserveAspectRatio="none" viewBox="168.100 878 126.600 219.500"><rect x="190" y="908" width="30" height="76" fill="url(#bar)"/><path d="M190 930H220M190 957H220" stroke="#2b7a00" stroke-width="1.500"/><rect x="240" y="990" width="30" height="70" fill="#d81818"/><path d="M186 987H275" stroke="#111" stroke-width="3"/><text class="px" transform="translate(243 973) scale(1.600 2.600)" font-size="26">2</text><text class="px" transform="translate(194 1052) scale(1.600 2.600)" font-size="26">1</text></svg>
        <svg preserveAspectRatio="none" class="sep" viewBox="337 878 126.600 219.500"><path d="M397 915L447 1000L410 1066L358 980Z" fill="#b8963c" stroke="#4a3608" stroke-width="2.500"/><path d="M398 945L430 998L409 1034L375 982Z" fill="#c8c8c8" stroke="#5c4510" stroke-width="3"/><path d="M385 965L418 1016M395 955L424 1005" stroke="#999" stroke-width="1"/></svg>
        <svg preserveAspectRatio="none" class="sep" viewBox="505.900 878 126.600 219.500"><path d="M538 1005V970M552 1005V920M565 1005V990M593 1005V945M606 1005V975" stroke="#b81010" stroke-width="6"/><path d="M530 1017H618" stroke="#222" stroke-width="3"/><path d="M539 1030V1068M553 1030V1068M566 1030V1068M580 1030V1068M593 1030V1068M606 1030V1068" stroke="#111" stroke-width="5.500"/></svg>
      </div>
      <h2>List</h2>
    </article>
    <article class="group seq">
      <div class="icons">
        <svg preserveAspectRatio="none" viewBox="674.500 658.600 126.600 219.500"><rect x="698" y="695" width="34" height="152" fill="#fff" stroke="#111" stroke-width="3"/><path d="M708 696V718Q715 730 722 718V696" fill="none" stroke="#111" stroke-width="2.500"/><text class="px" transform="translate(703 780) scale(1.600 2.600)" font-size="24">1</text><text class="px" transform="translate(703 836) scale(1.600 2.600)" font-size="24">2</text><path class="cross" d="M732 760L742 748L757 778L772 750L783 762L767 795L783 828L772 840L757 812L742 840L732 825L747 795Z"/></svg>
        <svg preserveAspectRatio="none" class="sep" viewBox="843.400 658.600 126.600 219.500"><rect x="866" y="748" width="88" height="38" fill="#111"/><path d="M882 755H894V778H882ZM904 755H917V778H904ZM934 755H948V778H934Z" fill="#fff"/><text class="px" transform="translate(886 738) scale(1.450 2.600)" font-size="23">0.0</text><text class="px" transform="translate(887 840) scale(1.450 2.600)" font-size="23">1.0</text></svg>
        <svg preserveAspectRatio="none" class="sep" viewBox="1012 658.600 126.600 219.500"><path d="M1040 795Q1058 830 1068 760Q1078 670 1092 705Q1100 810 1118 825" fill="none" stroke="#ff9c9c" stroke-width="9"/><path d="M1031 790Q1052 795 1064 770Q1072 700 1078 708Q1086 715 1092 768Q1100 790 1114 808Q1122 808 1130 792" fill="none" stroke="#222" stroke-width="2.500"/></svg>
        <svg preserveAspectRatio="none" viewBox="674.500 878 126.600 219.500"><rect x="698" y="921" width="34" height="132" fill="#fff" stroke="#111" stroke-width="3"/><path d="M698 921h17v26h17v26h-17v27h17v27h-17v26h-17v-26h17v-27h-17v-27h17v-26h-17z" fill="#111"/><path class="cross" d="M728 980L738 968L752 997L767 970L778 982L762 1014L778 1048L767 1060L752 1031L738 1060L728 1046L742 1014Z"/></svg>
        <svg preserveAspectRatio="none" class="sep" viewBox="843.400 878 126.600 219.500"><rect x="917" y="915" width="36" height="74" fill="#ddd" stroke="#888" stroke-width="2.500"/><text class="px grey" transform="translate(926 973) scale(1.500 2.600)" font-size="22">2</text><rect x="892" y="948" width="36" height="80" fill="#eee" stroke="#444" stroke-width="2.500"/><text class="px" transform="translate(902 1010) scale(1.500 2.600)" font-size="22">1</text><rect x="865" y="988" width="38" height="80" fill="#fff" stroke="#111" stroke-width="3"/><text class="px" transform="translate(873 1051) scale(1.500 2.600)" font-size="24">0</text></svg>
        <svg preserveAspectRatio="none" class="sep" viewBox="1012 878 126.600 219.500"><path d="M1042 985L1084 965L1120 985V1036L1086 1058L1042 1040Z" fill="#ffb400" stroke="#6a3800" stroke-width="2.500"/><path d="M1086 1000L1120 985V1036L1086 1058Z" fill="#e87800"/><path d="M1058 988Q1062 965 1064 950L1059 914L1068 930H1075L1084 914L1080 955L1094 985Q1078 1000 1058 988Z" fill="#111"/></svg>
      </div>
      <h2>Sequence</h2>
    </article>
    <article class="group sets">
      <div class="icons">
        <svg preserveAspectRatio="none" viewBox="1181.600 658.600 126.600 219.500"><rect class="tile" x="1205" y="704" width="79" height="136" rx="8" ry="14"/><path d="M1238 728Q1227 730 1227 748Q1227 768 1218 772Q1227 776 1227 796Q1227 818 1238 820" fill="none" stroke="#0c3c0c" stroke-width="6"/><ellipse cx="1252" cy="772" rx="8" ry="14" fill="#0c3c0c"/><path d="M1284 758Q1272 760 1272 772Q1272 784 1284 786Z" fill="#0c3c0c"/></svg>
        <svg preserveAspectRatio="none" class="sep" viewBox="1350.500 658.600 126.600 219.500"><rect class="tile" x="1376" y="704" width="79" height="136" rx="8" ry="14"/><path d="M1400 738L1432 804M1432 738L1400 804" stroke="#0c3c0c" stroke-width="9" stroke-linecap="round"/></svg>
        <svg preserveAspectRatio="none" class="sep" viewBox="-18.500 617.400 126.600 205.800"><g stroke="#555" stroke-width="2"><ellipse cx="33" cy="664" rx="13" ry="20" fill="#ddd"/><path d="M12 690Q22 678 33 680Q46 678 50 692V745L44 750V795Q36 805 32 795Q24 806 16 795V750L11 740Z" fill="#bdbdbd"/></g><g stroke="#7a1c00" stroke-width="2"><ellipse cx="72" cy="662" rx="13" ry="19" fill="#ffa040"/><path d="M56 690Q62 678 73 680Q88 678 95 692V742L89 750V793Q80 805 74 796Q66 806 58 795V750L54 740Z" fill="#ee4408"/></g></svg>
        <svg preserveAspectRatio="none" viewBox="1181.600 878 126.600 219.500"><rect class="tile" x="1205" y="923" width="79" height="136" rx="8" ry="14"/><path d="M1233 956L1256 1026" stroke="#0c3c0c" stroke-width="9" stroke-linecap="round"/></svg>
        <svg preserveAspectRatio="none" class="sep" viewBox="1350.500 878 126.600 219.500"><rect class="tile" x="1376" y="923" width="79" height="136" rx="8" ry="14"/><path d="M1394 954H1425Q1438 956 1436 974Q1436 992 1425 992H1394M1394 1024H1436" fill="none" stroke="#0c3c0c" stroke-width="8" stroke-linecap="round"/></svg>
        <svg preserveAspectRatio="none" class="sep" viewBox="-18.500 823.200 126.600 205.800"><g fill="#ddd" stroke="#999" stroke-width="2.500"><rect x="6" y="858" width="26" height="36" rx="5"/><rect x="15" y="890" width="16" height="28" rx="4"/><rect x="48" y="862" width="18" height="34" rx="4"/><rect x="79" y="858" width="16" height="24" rx="4"/><rect x="74" y="900" width="15" height="24" rx="4"/><rect x="7" y="930" width="15" height="26" rx="4"/><rect x="24" y="954" width="18" height="32" rx="4"/><rect x="6" y="968" width="20" height="32" rx="4"/><rect x="76" y="966" width="18" height="34" rx="4"/></g><rect x="65" y="946" width="14" height="24" fill="#eee" stroke="#c00" stroke-width="3.500"/><path d="M47 924L58 942M58 924L47 942" stroke="#c02020" stroke-width="2.500"/></svg>
      </div>
      <h2>Sets</h2>
    </article>
    <article class="group text">
      <div class="icons">
        <svg preserveAspectRatio="none" viewBox="150.800 617.400 126.600 205.800"><path d="M194 690L192 655Q214 645 218 668Q218 685 196 686Q222 690 214 716M170 718Q190 712 212 720Q240 716 256 724M172 715L186 780M190 795L205 750L178 740M240 735Q214 740 222 780Q230 796 242 794" fill="none" stroke="#7a1c1c" stroke-width="4.500"/><path d="M212 685L222 710L240 722L224 735L216 765L206 735L192 722L208 708Z" fill="#180404"/></svg>
        <svg preserveAspectRatio="none" class="sep" viewBox="319.600 617.400 126.600 205.800"><text class="px" transform="translate(338 697) scale(1.250 2.400)" font-size="30">AB</text><path d="M342 715V770H378V752L400 772L378 792V778" fill="none" stroke="#111" stroke-width="3"/><text class="px" transform="translate(404 795) scale(1.500 2.400)" font-size="30">C</text></svg>
        <svg preserveAspectRatio="none" viewBox="150.800 823.200 126.600 205.800"><path d="M176 874L190 905M208 856V892M238 868L225 900" stroke="#222" stroke-width="4.500"/><path d="M170 1000L184 915L200 1000M175 974H196M226 915L220 998Q250 1002 252 970Q252 956 228 956Q256 950 254 930Q250 914 226 920" fill="none" stroke="#111" stroke-width="4.500"/></svg>
        <svg preserveAspectRatio="none" class="sep" viewBox="319.600 823.200 126.600 205.800"><path d="M361 862V980" stroke="#666" stroke-width="6"/><path d="M344 962L361 1000L379 962L361 972Z" fill="#111"/><rect x="386" y="858" width="38" height="140" fill="#eee" stroke="#111" stroke-width="3"/><text class="px" transform="translate(393 920) scale(1.500 2.450)" font-size="27">A</text><text class="px" transform="translate(393 986) scale(1.500 2.450)" font-size="27">Z</text></svg>
      </div>
      <h2>Text</h2>
    </article>
    <article class="group tree">
      <div class="icons">
        <svg preserveAspectRatio="none" viewBox="484 617.400 126.600 205.800"><path d="M500 700L518 740L505 760M590 695L575 740L588 758" fill="none" stroke="#3d9a20" stroke-width="6"/><path d="M520 680V725L502 766L524 756L522 782L540 756L548 784L560 756L578 778L574 750L592 758L570 725V680Z" fill="url(#wood)" stroke="#3a2008" stroke-width="2"/><ellipse cx="545" cy="682" rx="26" ry="18" fill="#f0c070" stroke="#5a3410" stroke-width="2"/><ellipse cx="545" cy="682" rx="12" ry="8" fill="none" stroke="#b07830" stroke-width="1.500"/></svg>
        <svg preserveAspectRatio="none" viewBox="610.700 617.400 126.600 205.800"><path d="M629 674H719" stroke="#111" stroke-width="5" stroke-dasharray="5 3"/><path d="M636 690L712 686L702 705L720 722L698 722L712 760L690 735L674 730L652 738L640 768L648 728L628 722L650 706Z" fill="#111"/><path d="M674 700V790" stroke="#111" stroke-width="4.500"/><path d="M634 796Q674 786 714 796Z" fill="#234"/></svg>
        <svg preserveAspectRatio="none" viewBox="484 823.200 126.600 205.800"><path d="M543 1000V945" stroke="#1b7a10" stroke-width="6"/><path d="M512 999H578" stroke="#1b5a20" stroke-width="3.500"/><path d="M506 856Q520 935 543 950Q545 895 506 856ZM593 870Q584 922 546 932Q554 892 593 870Z" fill="url(#leaf)" stroke="#0c6a08" stroke-width="1.500"/></svg>
        <svg preserveAspectRatio="none" viewBox="610.700 823.200 126.600 205.800"><path d="M650 925V965L634 992L654 985V1000L670 980L684 1000L690 980L710 996L696 960V925Z" fill="url(#wood)" stroke="#3a2008" stroke-width="2"/><ellipse cx="673" cy="924" rx="24" ry="14" fill="#f0c070" stroke="#5a3410" stroke-width="2"/><path d="M671 932V892" stroke="#1b7a10" stroke-width="5"/><path d="M641 850Q646 888 672 896Q672 866 641 850ZM707 846Q704 886 674 894Q676 862 707 846Z" fill="url(#leaf)" stroke="#0c6a08" stroke-width="1.500"/></svg>
      </div>
      <h2>Tree</h2>
    </article>
  </div>
  <div class="gh-tools">
    <svg preserveAspectRatio="none" viewBox="22.600 1317 114.600 204"><path d="M44 1335H72L78 1348H108V1400H44Z" fill="#eee" stroke="#777" stroke-width="2.500"/><path d="M36 1410L70 1404L80 1388H116V1500H36Z" fill="#6cc838" stroke="#1a5a0c" stroke-width="3"/><path d="M42 1430H112" stroke="#b8f08c" stroke-width="3"/></svg>
    <svg preserveAspectRatio="none" viewBox="137.200 1317 120.600 204"><path d="M150 1332H244V1500H160L150 1486Z" fill="#1c6cf0" stroke="#0c2c70" stroke-width="3"/><rect x="167" y="1334" width="60" height="74" fill="#e8e8e8" stroke="#889" stroke-width="1.500"/><path d="M173 1357H221M173 1378H221" stroke="#bbb" stroke-width="2"/><rect x="168" y="1438" width="46" height="62" fill="#999" stroke="#113" stroke-width="2.500"/><rect x="176" y="1448" width="15" height="38" fill="#1c6cf0"/></svg>
    <div class="zoom"><span>217%</span><svg class="chev" width="24" height="16" viewBox="0 0 24 16"><path d="M2 3L12 13L22 3" fill="none" stroke="#444" stroke-width="2"/></svg></div>
    <svg preserveAspectRatio="none" viewBox="904.600 1317 120.600 204"><path d="M955 1341H924V1395M978 1341H1009V1395M924 1438V1490H955M978 1490H1009V1438" fill="none" stroke="#222" stroke-width="9"/><path d="M956 1398L976 1434M976 1398L956 1434" stroke="#222" stroke-width="5"/></svg>
    <i class="arr"></i>
    <svg preserveAspectRatio="none" viewBox="1076.500 1317 120.600 204"><path d="M1088 1418Q1110 1365 1136 1364Q1162 1365 1184 1418Q1162 1468 1136 1470Q1110 1468 1088 1418Z" fill="#f4f4f4" stroke="#222" stroke-width="3.500"/><ellipse cx="1136" cy="1417" rx="27" ry="46" fill="#5ab4f0" stroke="#1c4c78" stroke-width="2.500"/><ellipse cx="1136" cy="1417" rx="11" ry="18" fill="#081828"/><ellipse cx="1144" cy="1400" rx="6" ry="8" fill="#fff"/></svg>
    <i class="arr"></i>
    <svg preserveAspectRatio="none" viewBox="1242 1317 117.600 204"><path d="M1256 1382Q1275 1390 1262 1450Q1258 1498 1286 1498" fill="none" stroke="#5a1010" stroke-width="4"/><path d="M1296 1435L1340 1344Q1348 1380 1344 1420L1318 1462Z" fill="#f05050" stroke="#c01818" stroke-width="1.500"/><path d="M1296 1435L1318 1462L1282 1500L1290 1450Z" fill="#e0b060" stroke="#6a4010" stroke-width="2"/><path d="M1280 1502L1286 1475L1296 1488Z" fill="#300"/></svg>
    <b></b>
    <svg preserveAspectRatio="none" viewBox="663.400 1234.800 114.600 191"><path d="M680 1290L705 1250Q735 1240 752 1290L740 1340Q700 1340 678 1320Z" fill="url(#paper)" stroke="#888" stroke-width="2"/><ellipse cx="732" cy="1284" rx="16" ry="26" fill="#bbb" stroke="#888" stroke-width="1.500"/><path d="M676 1360L690 1340Q716 1325 742 1340L756 1360L740 1398Q716 1415 690 1398Z" fill="#eee" stroke="#333" stroke-width="2.500"/><path d="M678 1358Q716 1310 754 1358Q736 1392 716 1390Q690 1388 678 1358Z" fill="#222"/></svg>
    <svg preserveAspectRatio="none" viewBox="778 1234.800 114.600 191"><path d="M786 1325L832 1250Q870 1245 880 1320L832 1404Q785 1410 786 1325Z" fill="#fafafa" stroke="#333" stroke-width="2.500"/><ellipse cx="852" cy="1292" rx="20" ry="42" fill="none" stroke="#444" stroke-width="2.500" transform="rotate(-12 852 1292)"/><ellipse cx="853" cy="1294" rx="11" ry="27" fill="none" stroke="#777" stroke-width="2" transform="rotate(-12 853 1294)"/><ellipse cx="812" cy="1362" rx="18" ry="38" fill="none" stroke="#888" stroke-width="2" transform="rotate(-12 812 1362)"/></svg>
    <svg preserveAspectRatio="none" class="picked" viewBox="892.600 1234.800 114.600 191"><path d="M900 1330L944 1250Q990 1246 997 1330L948 1408Q905 1400 900 1330Z" fill="url(#red)" stroke="#500" stroke-width="2.500"/><ellipse cx="970" cy="1290" rx="18" ry="36" fill="#7a0505" stroke="#d33" stroke-width="2"/><path d="M918 1325L948 1268" stroke="#ff8a80" stroke-width="5"/></svg>
    <u></u>
    <svg preserveAspectRatio="none" viewBox="1032.800 1234.800 114.600 191"><path d="M1045 1255Q1072 1285 1062 1340Q1064 1385 1126 1402" fill="none" stroke="#444" stroke-width="3"/><path d="M1076 1250Q1128 1240 1136 1320L1108 1392L1070 1380Q1078 1330 1066 1300Z" fill="#0aa0a0" stroke="#034c50" stroke-width="2.500"/><ellipse cx="1110" cy="1288" rx="19" ry="34" fill="#067078" stroke="#5cdcdc" stroke-width="2"/></svg>
    <svg preserveAspectRatio="none" viewBox="1147.400 1234.800 114.600 191"><path d="M1154 1335L1178 1290L1226 1372L1200 1406Q1154 1395 1154 1335Z" fill="#ddd" stroke="#777" stroke-width="2"/><path d="M1178 1290L1200 1250Q1248 1248 1250 1325L1226 1372Z" fill="#66b010" stroke="#264c04" stroke-width="2.500"/><ellipse cx="1222" cy="1288" rx="19" ry="34" fill="#3c7a08" stroke="#a8e050" stroke-width="2"/><path d="M1156 1268L1236 1398" stroke="#111" stroke-width="2.500"/></svg>
    <svg preserveAspectRatio="none" viewBox="1262 1234.800 114.600 191"><ellipse cx="1316" cy="1384" rx="42" ry="16" fill="#bbb"/><path d="M1316 1249A44 71 0 0 0 1316 1391Z" fill="#e87c10"/><path d="M1285 1370Q1300 1391 1316 1391V1340Z" fill="#8a2c08"/><path d="M1316 1249A44 71 0 0 1 1316 1391Z" fill="#e8e8e8"/><ellipse cx="1316" cy="1320" rx="44" ry="71" fill="none" stroke="#4a3a30" stroke-width="2.500"/></svg>
    <em></em>
    <svg preserveAspectRatio="none" viewBox="1382.600 1234.800 114.600 191"><path d="M1430 1264L1468 1278L1480 1324L1468 1376L1432 1392L1406 1366L1399 1320L1408 1280Z" fill="url(#orb)" stroke="#1c3c8c" stroke-width="3"/><ellipse cx="1428" cy="1308" rx="14" ry="26" fill="#cfe9ff" opacity=".7"/></svg>
    <i class="arr"></i>
  </div>
  <div class="canvas">
    <svg viewBox="1795 583 2027 1433" width="2027" height="1433">
      <defs><pattern id="grid" patternUnits="userSpaceOnUse" x="2020.800" y="601.700" width="325.200" height="108.400"><path d="M0 0H325.200M0 108.400H325.200M0 0V108.400M325.200 0V108.400" stroke="#b8b3ab" stroke-width="2.600" fill="none"/></pattern></defs>
      <rect x="1795" y="583" width="2027" height="1433" fill="#d4cfc8"/>
      <rect x="1795" y="583" width="2027" height="1433" fill="url(#grid)"/>
      <g fill="#ebdabf" fill-opacity=".86" stroke="#b3a793" stroke-width="2"><rect x="1815" y="635" width="1006" height="379"/><rect x="1785" y="1118" width="1094.500" height="336"/></g>
      <rect x="3729" y="1130.500" width="140" height="174.500" rx="44" fill="#b89fe9" fill-opacity=".9" stroke="#97899f" stroke-width="2"/>
      <g class="wires">
        <path d="M2200 678C2272 678 2136 810 2198 810"/>
        <path d="M1795 722C1870 736 2080 800 2198 811" stroke-width="7"/>
        <path d="M1795 932C1815 952 1840 962 1872 962"/>
        <path d="M2023 962C2032 962 2014 914 2030 914"/>
        <path d="M2182 936C2214 936 2170 853 2200 853"/>
        <path d="M2364 824.500L2420 826"/><path d="M2370 853C2398 853 2395 869 2420 869"/><path d="M2575 868.500H2652"/>
        <path d="M2806 869C2903 869 2918 895 2810 916C2780 922 2740 933 2709 939.500L1795 1119.500" stroke-width="7"/>
        <path d="M1848 1198C1940 1198 1970 1211 2070 1211"/><path d="M1838 1220C1900 1250 1980 1254 2070 1254"/>
        <path d="M1848 1241C1950 1241 1940 1350 2050 1350"/><path d="M1795 1352C1850 1385 1950 1393 2050 1393"/><path d="M1810 1388Q1840 1385 1797 1356"/>
        <path d="M2256 1211C2370 1211 2370 1166 2482 1166"/><path d="M2256 1254C2370 1254 2370 1319 2482 1319"/>
        <path d="M2236 1350C2340 1350 2380 1363 2482 1363"/><path d="M2236 1393C2365 1393 2350 1209 2482 1209"/>
        <path d="M2650 1209L2720 1211"/><path d="M2650 1363L2742 1365"/>
        <path d="M2842 1211C3040 1211 3140 1160 3149 930C3154 780 3160 660 3290 580"/>
        <path d="M2862 1365.500C3075 1365 3156 1230 3156 930C3155 830 3132 760 3121 580"/>
        <path d="M3445 1339Q3650 1338 3825 1328"/><path d="M3456 1422Q3650 1421 3825 1412"/>
      </g>
      <g class="grips">
        <circle cx="2196" cy="678" r="8"/><circle cx="2207" cy="810" r="8"/><circle cx="2207" cy="853" r="8"/><circle cx="2207" cy="897" r="8"/><circle cx="2363" cy="853" r="8"/>
        <circle cx="2426" cy="826" r="8"/><circle cx="2426" cy="869" r="8"/><circle cx="2426" cy="912" r="8"/><circle cx="2570" cy="869" r="8"/>
        <circle cx="2658" cy="869" r="8"/><circle cx="2658" cy="912" r="8"/><circle cx="2800" cy="869" r="8"/><circle cx="2800" cy="912" r="8"/>
        <circle cx="1882" cy="962" r="8"/><circle cx="2015" cy="962" r="8"/><circle cx="2034" cy="914" r="8"/><circle cx="2034" cy="958" r="8"/><circle cx="2175" cy="936" r="8"/>
        <circle cx="1841" cy="1198" r="8"/><circle cx="1841" cy="1241" r="8"/><circle cx="1802" cy="1387" r="8"/>
        <circle cx="2077" cy="1211" r="8"/><circle cx="2077" cy="1254" r="8"/><circle cx="2251" cy="1211" r="8"/><circle cx="2251" cy="1254" r="8"/>
        <circle cx="2058" cy="1350" r="8"/><circle cx="2058" cy="1393" r="8"/><circle cx="2231" cy="1350" r="8"/><circle cx="2231" cy="1393" r="8"/>
        <circle cx="2489" cy="1165" r="8"/><circle cx="2489" cy="1209" r="8"/><circle cx="2489" cy="1252" r="8"/><circle cx="2645" cy="1209" r="8"/>
        <circle cx="2489" cy="1319" r="8"/><circle cx="2489" cy="1363" r="8"/><circle cx="2489" cy="1406" r="8"/><circle cx="2645" cy="1363" r="8"/>
        <circle cx="2728" cy="1211" r="8"/><circle cx="2836" cy="1211" r="8"/><circle cx="2750" cy="1365.500" r="8"/><circle cx="2857" cy="1365.500" r="8"/>
        <circle cx="3445" cy="596" r="8"/><circle cx="3440" cy="1339" r="8"/><circle cx="3451" cy="1422" r="8"/>
      </g>
      <g class="nodes">
        <rect x="1837" y="656" width="358" height="43.500" rx="5" fill="url(#lite)" class="light"/><path d="M1934 656V699.500H1842Q1837 699.500 1837 694V661Q1837 656 1842 656Z"/>
        <rect x="2207" y="785" width="157" height="138" rx="5"/><rect x="2427" y="800" width="142" height="138" rx="5"/><rect x="2658.500" y="843" width="141" height="95" rx="5"/><rect x="1883" y="932.500" width="132" height="60" rx="5"/><rect x="2034" y="888" width="141" height="96" rx="5"/>
        <rect x="1780" y="1173" width="61.500" height="94" rx="5" fill="url(#lite)"/><rect x="1780" y="1346" width="22" height="84" rx="5" fill="#fff"/>
        <rect x="2078" y="1186" width="173" height="95" rx="5"/><rect x="2058.500" y="1324.500" width="173" height="95" rx="5"/>
        <rect x="2490" y="1140" width="155" height="139" rx="5"/><rect x="2490" y="1294" width="155" height="138" rx="5"/>
        <rect x="2729" y="1185.500" width="107" height="51.500" rx="5"/><rect x="2750" y="1340" width="107" height="51" rx="5"/>
        <rect x="3446" y="540" width="156" height="82" rx="5"/><rect x="3216" y="1315.500" width="223" height="47.500" rx="5"/><rect x="3224.500" y="1398" width="225.500" height="47" rx="5"/><rect x="3794" y="1196" width="80" height="44" rx="5"/>
      </g>
      <g class="shine"><path d="M1841 659H1930M1938 659H2191M2211 787.500H2360M2431 802.500H2565M2662 845.500H2796M1887 935H2011M2038 890.500H2171M2082 1188.500H2247M2062 1327H2228M2494 1142.500H2641M2494 1296.500H2641M2733 1188H2832M2754 1342.500H2853M3220 1318H3436M3228 1400.500H3446M3798 1198.500H3822"/></g>
      <g fill="url(#dark)" stroke="#000" stroke-width="3"><rect x="3335" y="1320.500" width="100" height="38" rx="2"/><rect x="3346" y="1403" width="99" height="38" rx="2"/></g><g fill="none" stroke="#8a8f8c" stroke-width="1.500"><rect x="3338" y="1323" width="94" height="33"/><rect x="3349" y="1405.500" width="93" height="33"/></g>
      <path d="M1956 678.500H2174M1956 678V666M1977 678V671M1998.500 678V671M2020 678V671M2042 678V671M2064 678V666M2086 678V671M2108 678V671M2129 678V671M2151 678V671M2173 678V666" stroke="#aaa" stroke-width="1.500"/>
      <path d="M1956 670.500L1963 678L1956 685.500L1949 678Z" fill="#fff" stroke="#000" stroke-width="3"/>
      <rect x="1970" y="668" width="16" height="19" fill="#dcdcdc"/>
      <g class="lbl">
        <text x="1852" y="685.500" textLength="65">Data 1</text><text x="1972" y="685.500">0</text>
        <text x="2223" y="818">D1</text><text x="2223" y="861">D2</text><text x="2223" y="905">D3</text><text x="2327" y="861">R</text>
        <text x="2452" y="833">L</text><text x="2457" y="877">I</text><text x="2441" y="920">W</text><text x="2536" y="877">L</text>
        <text x="2674" y="877">C</text><text x="2674" y="920">R</text><text x="2761" y="877">S</text><text x="2762" y="920">V</text>
        <text x="1897" y="970">L</text><text x="1981" y="970">L</text><text x="2049" y="922">A</text><text x="2051" y="966">B</text><text x="2138" y="944">R</text>
        <text x="1802" y="1206">P</text><text x="1801" y="1249">N</text>
        <text x="2129" y="1219">L</text><text x="2127" y="1262">P</text><text x="2213" y="1219">A</text><text x="2214" y="1262">B</text>
        <text x="2110" y="1358">L</text><text x="2108" y="1401">P</text><text x="2194" y="1358">A</text><text x="2195" y="1401">B</text>
        <text x="2505" y="1173">D1</text><text x="2505" y="1217">D2</text><text x="2505" y="1260">D3</text><text x="2609" y="1217">R</text>
        <text x="2505" y="1327">D1</text><text x="2505" y="1371">D2</text><text x="2505" y="1414">D3</text><text x="2609" y="1371">R</text>
        <text x="3462" y="604">D3</text><text x="3237" y="1347" textLength="70">Button</text><text x="3246" y="1429" textLength="73">Toggle</text><text x="3808" y="1225">Fe</text>
      </g>
      <text x="3360" y="1428" class="mono">True</text>
      <use href="#merge" x="2268" y="831" width="44" height="44"/><use href="#merge" x="2550" y="1186" width="44" height="44"/><use href="#merge" x="2550" y="1340" width="44" height="44"/>
      <use href="#item" x="2479" y="846" width="43" height="44"/>
      <path d="M2709 868Q2721 873 2720 888M2720 891Q2719 907 2731 907Q2739 906 2737 897" fill="none" stroke="#111" stroke-width="5"/><path d="M2709 880L2714 883M2729 874L2725 880M2709 898L2715 893" stroke="#666" stroke-width="1.500"/>
      <rect x="1937" y="940" width="14" height="35" fill="url(#bar)"/><path d="M1923 966H1930V960L1938 969L1930 978V972H1923Z" fill="#c41010"/><rect x="1938" y="964" width="12" height="11" fill="#c41010" stroke="#400" stroke-width="1"/><text x="1952" y="975" class="px" font-size="20">L</text>
      <rect x="2082" y="917" width="36" height="36" rx="5" fill="#f2f2f2" stroke="#666" stroke-width="1.500"/><path d="M2092 935H2107" stroke="#111" stroke-width="5"/>
      <use href="#drop" x="2084" y="1196" width="29" height="29"/><use href="#drop" x="2064.500" y="1334.500" width="29" height="29"/>
      <use href="#dispatch" x="2156" y="1209" width="42" height="44"/><use href="#dispatch" x="2137" y="1348" width="42" height="44"/>
      <use href="#hex" x="2756" y="1188" width="52" height="46"/><use href="#hex" x="2777" y="1342.500" width="52" height="46"/>
      <path d="M3669 2003Q3672 1955 3731 1950Q3792 1955 3796 2010" fill="none" stroke="#000" stroke-width="8"/><circle cx="3732" cy="2016" r="61" fill="#fff" stroke="#222" stroke-width="5"/><circle cx="3732" cy="2016" r="56" fill="url(#dial)"/><path d="M3665 1946L3685 1949V1966H3669Z" fill="#000"/><path d="M3684 1980L3699 1967L3704 1986ZM3780 1980L3765 1967L3760 1986Z" fill="#fff"/>
    </svg>
  </div>
</section>
</body>
</html>
```
FILE: styles.css
```css
* { box-sizing: border-box; }
body { margin: 0; width: 3840px; height: 2016px; overflow: hidden; position: relative; font-family: "Open Sans", "Noto Sans", sans-serif; font-size: 35px; letter-spacing: -0.9px; color: #000; background: #e9ebf0; }
p, h2 { margin: 0; font-weight: 400; }
i, em { font-style: normal; }
span, label { white-space: nowrap; }
.defs { position: absolute; }
svg { display: block; flex: none; }

.rhino { width: 3840px; height: 2016px; display: flex; flex-direction: column; background: #e9ebf0; }
.title { height: 69px; background: #fff; display: flex; align-items: center; gap: 6px; padding-left: 2px; line-height: 69px; letter-spacing: -0.4px; flex: none; }
.logo { width: 48px; height: 48px; margin-top: -3px; }
.menu { height: 55px; flex: none; background: #fff; border-bottom: 1px solid #e4e4e8; line-height: 55px; padding-left: 22px; display: grid; grid-template-columns: 97px 102px 118px 133px 159px 127px 122px 127px 211px 199px 123px 165px 200px; }
.toolbars { flex: none; height: 158px; border-bottom: 2px solid #d0d8e6; margin-bottom: 1px; }
.tabs { position: relative; height: 64px; padding: 5px 0 0 57px; line-height: 59px; color: #303030; display: grid; grid-template-columns: 217px 200px 213px 189px 171px 331px 233px 250px; }
.tab-shape { position: absolute; left: 0; top: 0; }
.tools { display: flex; height: 84px; margin-left: 10px; padding-left: 6px; border-left: 2px solid #c9d2e4; }
.cell { width: 84px; height: 84px; position: relative; display: block; flex: none; }
.cell svg { width: 84px; height: 84px; overflow: visible; }
.cell svg *, .icons svg *, .gh-tools > svg *, .mesh * { vector-effect: non-scaling-stroke; }
.h { fill: #fff; stroke: #111; stroke-width: 2.5px; }
.fly::after { content: ""; position: absolute; left: 62px; top: 63px; width: 18px; height: 16px; background: #77787c; clip-path: polygon(100% 0, 100% 100%, 0 100%); }
.command { flex: none; height: 183px; margin-left: 19px; background: #fff; line-height: 63px; padding-left: 2px; letter-spacing: -0.6px; }
.history { height: 132px; margin-left: -2px; padding: 7px 0 0 2px; border-bottom: 2px solid #bcc8dc; }
.prompt { display: flex; height: 51px; line-height: 51px; align-items: center; }
.prompt b { width: 186px; letter-spacing: -0.9px; }
.caret { width: 2px; height: 48px; background: #000; }
.work { flex: none; height: 1450px; padding-top: 6px; display: flex; }
.palette { width: 218px; height: 1372px; border-top: 2px solid #d0d8e6; margin-top: 10px; padding: 8px 0; display: grid; grid-template-columns: 84px 84px 24px; grid-template-rows: repeat(16, 84px); column-gap: 0; }
.palette .cell:nth-of-type(odd) { grid-column: 1; }
.palette .cell:nth-of-type(even) { grid-column: 2; }
.palette .more { grid-column: 3; grid-row: 16; align-self: center; margin-left: 4px; }
.view-area { width: 1622px; }
.viewport { position: relative; height: 1371px; border: 1px solid #b9c6dd; border-width: 2px 0 1px 1px; background: #bebebe; }
.scene { width: 1621px; height: 1368px; }
.axis { font: 43px "Liberation Sans", sans-serif; fill: #606060; }
.view-label { position: absolute; left: 0; top: 0; width: 259px; height: 53px; background: #869fee; border-radius: 0 0 8px 0; color: #303030; line-height: 49px; padding-left: 15px; letter-spacing: -1px; }
.view-label b { display: block; width: 209px; height: 53px; border-right: 2px solid #3f5cb0; }
.view-label i { position: absolute; left: 232px; top: 21px; width: 19px; height: 10px; background: #222; clip-path: polygon(0 0, 100% 0, 50% 100%); }
.view-tabs { position: relative; height: 62px; line-height: 57px; padding: 0 0 3px 34px; color: #303030; display: grid; grid-template-columns: 224px 109px 134px 133px 40px; align-items: center; }
.view-tab-shape { position: absolute; left: 0; top: 0; }
.osnap { flex: none; height: 58px; margin: 0 0 0 10px; padding-left: 15px; border-left: 2px solid #c9d2e4; display: grid; grid-template-columns: 130px 146px 152px 132px 131px 112px 143px 127px 156px 144px 174px 206px 100px; color: #303030; line-height: 58px; }
.osnap label { display: flex; align-items: center; gap: 11px; }
.osnap i { width: 40px; height: 40px; border: 2px solid #606060; border-radius: 7px; background: #f4f4f4; flex: none; margin-top: -2px; }
.osnap .on { background: #0060bb; border: 0; position: relative; }
.osnap .on::after { content: ""; position: absolute; left: 11px; top: 13px; width: 19px; height: 9px; border: solid #fff; border-width: 0 0 2.5px 2.5px; transform: rotate(-48deg); }
.osnap .mid { width: 36px; height: 36px; border: 7px solid #fafafa; border-radius: 3px; background: #8c8e8c; }
.status { flex: none; height: 43px; border-top: 2px solid #bcc6dc; line-height: 44px; color: #303030; display: grid; grid-template-columns: 133px 248px 248px 248px 248px 489px 1fr; text-align: center; }
.status span { border-right: 1.5px solid #bcc6dc; height: 43px; letter-spacing: -0.8px; }
.status .layer, .status .snap { text-align: left; padding-left: 8px; display: flex; align-items: center; gap: 8px; }
.status .snap { padding-left: 12px; }
.layer i { width: 29px; height: 29px; background: #000; border: 3px solid #303030; }
.edge { position: absolute; right: 0; top: 0; }

.gh { position: absolute; left: 1792px; top: 16px; width: 2034px; height: 2030px; border: 3px solid #b4b4b4; border-radius: 22px 22px 0 0; background: #f0f0f0; box-shadow: 0 20px 70px rgba(0, 0, 0, .36), 0 0 14px rgba(0, 0, 0, .16); overflow: hidden; display: flex; flex-direction: column; }
.gh-title { height: 82px; flex: none; background: #fff; color: #999; line-height: 82px; letter-spacing: -0.8px; padding: 0 57px 0 16px; display: flex; justify-content: space-between; }
.controls { margin-top: 27px; }
.gh-menu { height: 76px; flex: none; background: linear-gradient(90deg, #f0f0f0, #fcfcfc); line-height: 80px; padding-left: 26px; display: grid; grid-template-columns: 87px 92px 109px 144px 164px 107px 1067px 240px; }
.doc { letter-spacing: -0.5px; }
.gh-tabs { height: 66px; flex: none; display: flex; font: 33px/66px "Liberation Sans", Arial, sans-serif; letter-spacing: 0; color: #666; margin-left: -2px; }
.gh-tabs span { width: 84.05px; flex: none; text-align: center; }
.gh-tabs .active { position: relative; height: 69px; background: #fff; color: #000; border: 2px solid #999; border-bottom: 0; border-radius: 18px 18px 0 0; line-height: 60px; }
.gh-tabs .cut { text-align: left; width: 14px; margin-left: -4px; overflow: hidden; }
.ribbon { height: 260px; flex: none; border: 1.5px solid #8a8a8a; border-width: 2px 1px 2px; border-radius: 16px 16px 0 0; background: linear-gradient(#d4d4d4, #efefef 80%); display: flex; gap: 12px; padding: 4px 0 0 6px; }
.group { height: 217px; border: 1.5px solid #8c8c8c; border-bottom: 0; border-radius: 12px; background: linear-gradient(#d7d7d7, #e9e9e9); overflow: hidden; flex: none; }
.list { width: 408px; } .seq, .sets { width: 324px; } .text { width: 209px; } .tree { width: 180px; }
.icons { height: 174px; padding: 2px 0 0 4px; display: grid; grid-template-rows: 84px 84px; justify-content: start; }
.icons svg { width: 84px; height: 84px; overflow: visible; }
.list .icons { grid-template-columns: 84px 84px 112px 112px; }
.seq .icons, .sets .icons { grid-template-columns: 84px 112px 112px; }
.text .icons { grid-template-columns: 84px 112px; }
.tree .icons { grid-template-columns: 84px 84px; }
.icons .sep { width: 98px; margin-left: 14px; padding-left: 13px; border-left: 1px solid #c2c2c2; }
.group h2 { height: 42px; background: linear-gradient(#303030, #181818); color: #fff; font: 30px/38px "Liberation Sans", Arial, sans-serif; letter-spacing: 0; text-align: center; position: relative; padding-right: 30px; }
.group h2::after { content: ""; position: absolute; right: 8px; top: 10px; width: 21px; height: 22px; background: #999; clip-path: polygon(42% 0, 58% 0, 58% 45%, 100% 45%, 50% 100%, 0 45%, 42% 45%); }
.px { font-family: "DejaVu Sans Mono", monospace; letter-spacing: -1px; fill: #111; }
.grey { fill: #888; }
.cross { fill: #e01c0c; stroke: #7a0800; stroke-width: 1.5px; }
.tile { fill: url(#green); stroke: #1c4c10; stroke-width: 3px; }
.gh-tools { height: 80px; flex: none; background: linear-gradient(#fff, #f4f4f4); display: grid; grid-template-columns: 76px 80px 429px 80px 34px 80px 30px 78px 1fr 76px 76px 76px 17px 76px 76px 76px 4px 76px 17px; padding-right: 13px; align-items: center; }
.gh-tools > svg { width: 100%; height: 78px; min-width: 0; }
.zoom { margin-left: 8px; height: 56px; border: 1.5px solid #8a8a8a; background: #fff; display: flex; justify-content: space-between; align-items: center; padding: 0 13px 0 3px; line-height: 54px; }
.arr { width: 13px; height: 8px; background: #000; justify-self: center; margin-top: 3px; clip-path: polygon(0 0, 100% 0, 50% 100%); }
.picked { outline: 2px solid #0078d7; outline-offset: -2px; background: #fff; }
.gh-tools u { width: 1.5px; height: 70px; background: #bbb; margin-left: 8px; }
.gh-tools em { width: 1.5px; height: 70px; background: #bbb; }
.canvas { width: 2027px; height: 1433px; flex: none; }
.wires { fill: none; stroke: #3a3a33; stroke-opacity: .82; stroke-width: 6.2px; }
.grips { fill: #fff; stroke: #000; stroke-width: 4px; }
.nodes { stroke: #1c1c20; stroke-width: 3px; fill: url(#node); }
.shine { stroke: #e8e8ee; stroke-width: 2px; }
.lbl { font-size: 22px; letter-spacing: -0.4px; fill: #000; }
.mono { font: 29px "Liberation Mono", monospace; letter-spacing: 0; fill: #dcdcdc; }
```
